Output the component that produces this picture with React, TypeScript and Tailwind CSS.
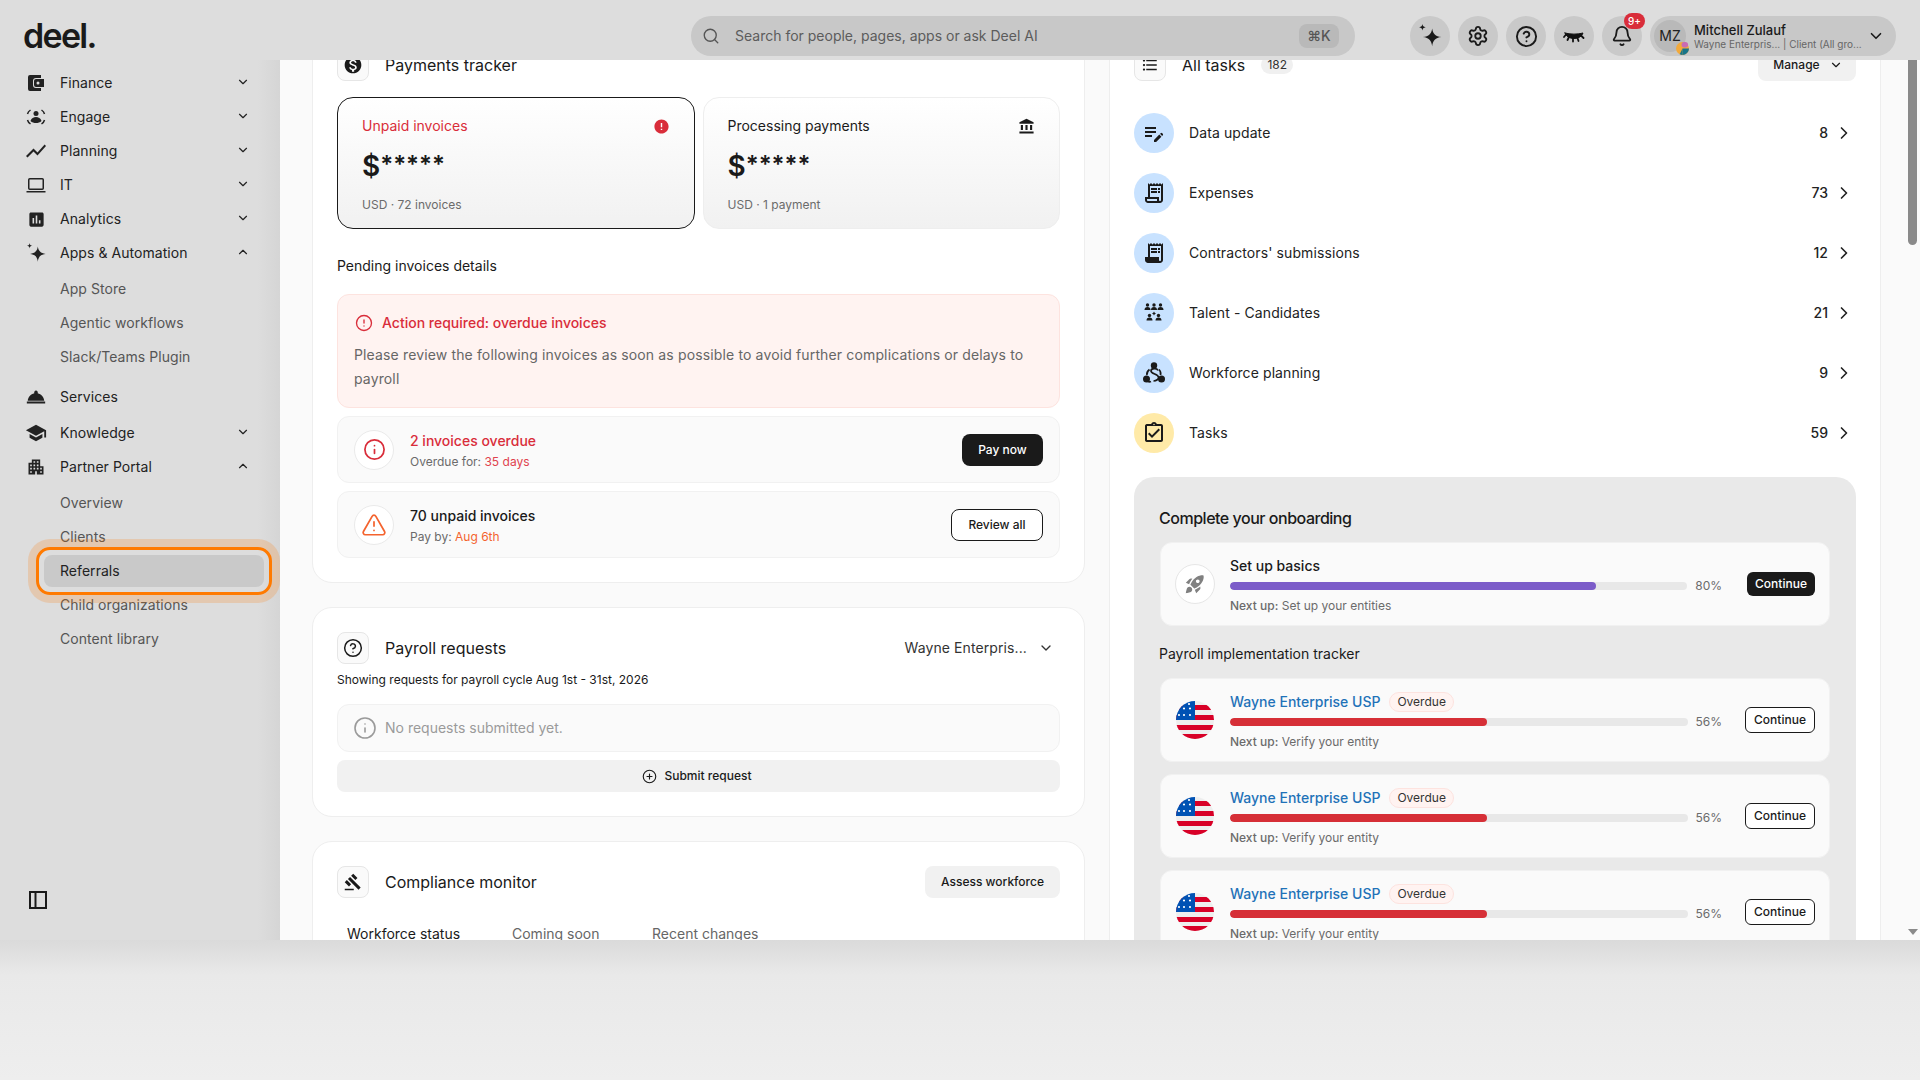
import { useId, type ReactNode } from 'react'
import {
  Bell,
  ChevronDown,
  ChevronRight,
  ChevronUp,
  CircleAlert,
  CircleHelp,
  CirclePlus,
  Info,
  Search,
  Settings,
  TriangleAlert,
} from 'lucide-react'
import {
  MdAccountBalance,
  MdApartment,
  MdAssessment,
  MdEditNote,
  MdError,
  MdFormatListBulleted,
  MdGavel,
  MdMonetizationOn,
  MdOutlineAssignmentTurnedIn,
  MdOutlineReceiptLong,
  MdReceiptLong,
  MdRocketLaunch,
  MdRoomService,
  MdSchool,
  MdShowChart,
} from 'react-icons/md'

function Sparkle({ size = 18 }: { size?: number }) {
  return (
    <svg width={size} height={size} viewBox="0 0 24 24" fill="currentColor">
      <path d="M14 5c.6 4.8 3 7.4 8.500 8-5.500.6-7.900 3.200-8.500 8.500-.6-5.300-3-7.900-8.500-8.500C11 12.400 13.400 9.800 14 5z" />
      <path d="M5 1c.3 2 .9 2.600 3 3-2.100.4-2.700 1-3 3-.3-2-.9-2.600-3-3 2.100-.4 2.700-1 3-3z" />
    </svg>
  )
}

function WalletIcon() {
  return (
    <svg width="18" height="18" viewBox="0 0 18 18" fill="currentColor">
      <path
        fillRule="evenodd"
        d="M3 1h11v3H9a3 3 0 0 0-3 3v4a3 3 0 0 0 3 3h5v3H3a2 2 0 0 1-2-2V3a2 2 0 0 1 2-2zm6 4h8v8H9a2 2 0 0 1-2-2V7a2 2 0 0 1 2-2zm2 2.500a1.500 1.500 0 1 0 0 3 1.500 1.500 0 0 0 0-3z"
      />
    </svg>
  )
}

function EngageIcon() {
  return (
    <svg width="20" height="20" viewBox="0 0 20 20" fill="none" stroke="currentColor" strokeWidth="1.5">
      <path d="M1.500 7C2 5 3 4 4.500 3M15.500 3C17 4 18 5 18.500 7M1.500 13c.5 2 1.500 3 3 4M15.500 17c1.500-1 2.500-2 3-4" />
      <circle cx="10" cy="6.500" r="2.500" fill="currentColor" stroke="none" />
      <path d="M4.500 14c1-3 3-4 5.500-4s4.500 1 5.500 4c-1.500 1.500-3.500 2-5.500 2s-4-.5-5.500-2z" fill="currentColor" stroke="none" />
    </svg>
  )
}

function LaptopIcon() {
  return (
    <svg width="20" height="16" viewBox="0 0 20 16" fill="none" stroke="currentColor" strokeWidth="1.5">
      <rect x="2.750" y="1.750" width="14.500" height="10.500" rx="1" />
      <path d="M.5 14.750h19" />
    </svg>
  )
}

function PanelIcon() {
  return (
    <svg width="18" height="18" viewBox="0 0 18 18" fill="none" stroke="#1a1a1a" strokeWidth="2">
      <rect x="1" y="1" width="16" height="16" />
      <path d="M6.500 1v16" />
    </svg>
  )
}

function ClosedEye() {
  return (
    <svg width="22" height="22" viewBox="0 0 22 22" fill="none" stroke="#111" strokeLinecap="round">
      <path d="M2 8c5 1.500 13 1.500 18 0-1 3-4 5.500-9 5.500S3 11 2 8z" fill="#111" strokeWidth="1" />
      <path d="M3 9.500 1 12M6 12l-1.500 3M10 13.500V16.500M14.500 13l1 3M18 10.500l2.500 2.500" strokeWidth="1.8" />
    </svg>
  )
}

function TalentIcon() {
  const person = (x: number, y: number) => (
    <g key={`${x}-${y}`}>
      <circle cx={x} cy={y} r="1.7" />
      <path d={`M${x - 3} ${y + 5}c0-2 1-3 3-3s3 1 3 3z`} />
    </g>
  )
  return (
    <svg width="22" height="22" viewBox="0 0 22 22" fill="#1a1a1a">
      {person(4.5, 3)}
      {person(11, 3)}
      {person(17.5, 3)}
      {person(6.5, 13.5)}
      {person(15.5, 13.5)}
      <path d="M11 9.500l.7 1.300 1.300.7-1.300.7-.7 1.300-.7-1.300-1.300-.7 1.300-.7z" />
    </svg>
  )
}

function WorkforceIcon() {
  return (
    <svg width="24" height="24" viewBox="0 0 24 24" fill="none" stroke="#1a1a1a" strokeWidth="1.7">
      <circle cx="12" cy="4.500" r="3.200" fill="#1a1a1a" stroke="none" />
      <circle cx="4.500" cy="18" r="3.500" fill="#1a1a1a" stroke="none" />
      <circle cx="19.500" cy="18" r="3.500" fill="#1a1a1a" stroke="none" />
      <path d="M16 9.500C15 7 9 7 9 10c0 3 7 3 7.500 6 .3 2-2 4-5 4" />
      <path d="M7.500 8.500C5.500 10 4.500 12 5 14M9 20.500c-1 .5-2 .5-3 0M18.500 14c.5-2 0-4-1.500-5.500" />
    </svg>
  )
}

function UsFlag() {
  const id = useId()
  return (
    <svg width="38" height="38" viewBox="0 0 38 38" className="shrink-0">
      <defs>
        <clipPath id={id}>
          <circle cx="19" cy="19" r="19" />
        </clipPath>
      </defs>
      <g clipPath={`url(#${id})`}>
        <rect width="38" height="38" fill="#eeeeee" />
        <rect y="4" width="38" height="5" fill="#d80027" />
        <rect y="14" width="38" height="5" fill="#d80027" />
        <rect y="24" width="38" height="5" fill="#d80027" />
        <rect y="33" width="38" height="5" fill="#d80027" />
        <rect width="19" height="19" fill="#0052b4" />
        <g fill="#ffffff">
          <circle cx="13" cy="3" r="1.1" />
          <circle cx="8" cy="7.500" r="1.1" />
          <circle cx="14" cy="7.500" r="1.1" />
          <circle cx="3" cy="14" r="1.1" />
          <circle cx="8" cy="14" r="1.1" />
          <circle cx="14" cy="14" r="1.1" />
        </g>
      </g>
    </svg>
  )
}

function CompanyDot() {
  return (
    <svg width="13" height="13" viewBox="0 0 14 14" className="absolute -right-[3px] -bottom-[3px]">
      <circle cx="7" cy="7" r="7" fill="#f2a93b" />
      <path d="M7 7h7a7 7 0 0 1-7 7z" fill="#17758a" />
      <path d="M7 7v7a7 7 0 0 1-3-.7L7 7z" fill="#17758a" />
      <rect x="6" y="0" width="7" height="6" rx="3" fill="#c86bb4" />
    </svg>
  )
}

function NavItem({ icon, label, open }: { icon: ReactNode; label: string; open?: boolean }) {
  return (
    <div className="flex h-[34px] items-center text-sm tracking-[0.05px] text-[#222222]">
      <span className="flex w-[60px] shrink-0 justify-center pl-[16px] pr-[4px]">{icon}</span>
      <span>{label}</span>
      {open === true && <ChevronUp size={14} strokeWidth={2} className="-mt-[2px] ml-auto mr-[30px]" />}
      {open === false && <ChevronDown size={14} strokeWidth={2} className="-mt-[2px] ml-auto mr-[30px]" />}
    </div>
  )
}

function SubItem({ label }: { label: string }) {
  return <div className="flex h-[34px] items-center pl-[60px] text-sm tracking-[0.05px] text-[#555555]">{label}</div>
}

function Sidebar() {
  return (
    <aside className="flex h-full w-[280px] shrink-0 flex-col bg-[linear-gradient(to_right,#dddddd_92%,#d5d5d5)] pt-[6px]">
      <NavItem icon={<WalletIcon />} label="Finance" open={false} />
      <NavItem icon={<EngageIcon />} label="Engage" open={false} />
      <NavItem icon={<MdShowChart size={24} />} label="Planning" open={false} />
      <NavItem icon={<LaptopIcon />} label="IT" open={false} />
      <NavItem icon={<MdAssessment size={19} />} label="Analytics" open={false} />
      <NavItem icon={<Sparkle size={22} />} label="Apps & Automation" open />
      <div className="mt-[2px]">
        <SubItem label="App Store" />
        <SubItem label="Agentic workflows" />
        <SubItem label="Slack/Teams Plugin" />
      </div>
      <div className="mt-[6px]">
        <NavItem icon={<MdRoomService size={22} />} label="Services" />
      </div>
      <div className="mt-[2px]">
        <NavItem icon={<MdSchool size={22} />} label="Knowledge" open={false} />
        <NavItem icon={<MdApartment size={20} />} label="Partner Portal" open />
      </div>
      <div className="mt-[2px]">
        <SubItem label="Overview" />
        <SubItem label="Clients" />
        <div className="relative my-px ml-[44px] flex h-8 w-[220px] items-center rounded-lg bg-[#c9c9c9] pl-4 text-sm tracking-[0.05px] text-[#222222]">
          Referrals
          <div className="absolute -inset-2 rounded-[14px] border-[3px] border-[#ff7a00] shadow-[0_0_0_8px_rgba(255,122,0,0.2)]" />
        </div>
        <SubItem label="Child organizations" />
        <SubItem label="Content library" />
      </div>
      <div className="mb-[31px] ml-[29px] mt-auto">
        <PanelIcon />
      </div>
    </aside>
  )
}

function HeaderButton({ children }: { children: ReactNode }) {
  return (
    <div className="relative flex h-10 w-10 items-center justify-center rounded-full bg-[#c9c9c9] text-[#1a1a1a]">
      {children}
    </div>
  )
}

function Header() {
  return (
    <header className="flex h-[60px] shrink-0 items-center bg-[#dddddd] pt-3">
      <div className="w-[691px] shrink-0 pl-[23px] text-[34px] font-semibold leading-none tracking-[-0.05em] text-[#1a1a1a]">
        deel.
      </div>
      <div className="flex h-10 w-[664px] shrink-0 items-center rounded-full bg-[#c8c8c8] pl-[11px] pr-[16px]">
        <Search size={18} strokeWidth={1.8} className="text-[#555555]" />
        <span className="ml-[15px] text-sm text-[#5c5c5c]">Search for people, pages, apps or ask Deel AI</span>
        <span className="ml-auto flex h-6 w-10 items-center justify-center rounded-lg bg-[#b9b9b9] text-sm font-medium text-[#555555]">
          ⌘K
        </span>
      </div>
      <div className="ml-[55px] flex gap-2">
        <HeaderButton>
          <Sparkle size={26} />
        </HeaderButton>
        <HeaderButton>
          <Settings size={22} strokeWidth={2} />
        </HeaderButton>
        <HeaderButton>
          <CircleHelp size={23} strokeWidth={2} />
        </HeaderButton>
        <HeaderButton>
          <ClosedEye />
        </HeaderButton>
        <HeaderButton>
          <Bell size={22} strokeWidth={2} />
          <span className="absolute -right-[3px] -top-[3px] flex h-4 w-[21px] items-center justify-center rounded-full bg-[#d92d3a] text-[10px] font-medium text-white">
            9+
          </span>
        </HeaderButton>
      </div>
      <div className="ml-2 flex h-10 w-[246px] shrink-0 items-center rounded-full bg-[#c8c8c8] pl-1">
        <div className="relative flex h-8 w-8 shrink-0 items-center justify-center rounded-full bg-[#b9b9b9] text-sm text-[#222222]">
          MZ
          <CompanyDot />
        </div>
        <div className="ml-2 w-[168px] shrink-0">
          <div className="text-[13px] font-medium leading-[16px] text-[#1a1a1a]">Mitchell Zulauf</div>
          <div className="whitespace-nowrap text-[10px] leading-[12px] text-[#666666]">
            Wayne Enterpris... | Client (All gro...
          </div>
        </div>
        <ChevronDown size={18} strokeWidth={2.2} className="ml-[5px] text-[#1a1a1a]" />
      </div>
    </header>
  )
}

function Card({ children }: { children: ReactNode }) {
  return <section className="rounded-[20px] border border-[#eeeeee] bg-white p-6">{children}</section>
}

function IconBox({ children }: { children: ReactNode }) {
  return (
    <div className="flex h-8 w-8 shrink-0 items-center justify-center rounded-lg border border-[#e6e6e6] bg-[#fafafa] text-[#1a1a1a]">
      {children}
    </div>
  )
}

function BalanceCard({
  title,
  note,
  icon,
  selected,
}: {
  title: ReactNode
  note: string
  icon: ReactNode
  selected?: boolean
}) {
  return (
    <div
      className={`h-[132px] flex-1 rounded-2xl border bg-gradient-to-b from-white to-[#f1f1f1] px-6 pt-[18px] ${
        selected ? 'border-[#1a1a1a]' : 'border-[#eeeeee]'
      }`}
    >
      <div className="flex h-5 items-center justify-between text-sm">
        {title}
        {icon}
      </div>
      <div className="mt-[13px] h-[34px] text-[28px] font-semibold leading-[34px] text-[#1a1a1a]">
        $<span className="inline-block -translate-y-[3px] text-2xl">*****</span>
      </div>
      <div className="mt-[14px] text-xs leading-4 text-[#6b6b6b]">{note}</div>
    </div>
  )
}

function InvoiceRow({
  icon,
  title,
  sub,
  action,
}: {
  icon: ReactNode
  title: ReactNode
  sub: ReactNode
  action: ReactNode
}) {
  return (
    <div className="flex h-[67px] items-center rounded-xl border border-[#f1f1f1] bg-[#fafafa] pl-4 pr-4">
      <div className="flex h-10 w-10 shrink-0 items-center justify-center rounded-full border border-[#eaeaea] bg-white">
        {icon}
      </div>
      <div className="ml-4 pt-[2px]">
        <div className="text-sm font-medium leading-5">{title}</div>
        <div className="mt-[3px] text-xs leading-4 text-[#6b6b6b]">{sub}</div>
      </div>
      <div className="ml-auto">{action}</div>
    </div>
  )
}

function LeftColumn() {
  return (
    <div className="flex w-[773px] shrink-0 flex-col gap-6">
      <Card>
        <div className="flex items-center gap-4">
          <IconBox>
            <MdMonetizationOn size={20} />
          </IconBox>
          <h2 className="text-base text-[#1a1a1a]">Payments tracker</h2>
        </div>
        <div className="mt-4 flex gap-2">
          <BalanceCard
            selected
            title={<span className="text-[#d92d3a]">Unpaid invoices</span>}
            note="USD · 72 invoices"
            icon={<MdError size={17} className="text-[#d92d3a]" />}
          />
          <BalanceCard
            title={<span className="text-[#1a1a1a]">Processing payments</span>}
            note="USD · 1 payment"
            icon={<MdAccountBalance size={17} className="text-[#1a1a1a]" />}
          />
        </div>
        <div className="mt-[27px] text-sm leading-5 text-[#1a1a1a]">Pending invoices details</div>
        <div className="mt-[18px] rounded-xl border border-[#fde3df] bg-[#fff3f1] px-4 pb-4 pt-4">
          <div className="flex h-6 items-center gap-[7px] text-sm font-medium text-[#d92d3a]">
            <CircleAlert size={18} strokeWidth={1.8} className="ml-[1px]" />
            <span className="ml-[2px]">Action required: overdue invoices</span>
          </div>
          <p className="mt-2 text-sm leading-6 tracking-[0.14px] text-[#666666]">
            Please review the following invoices as soon as possible to avoid further complications or delays to payroll
          </p>
        </div>
        <div className="mt-2 flex flex-col gap-2">
          <InvoiceRow
            icon={<Info size={23} strokeWidth={1.8} className="text-[#d92d3a]" />}
            title={<span className="text-[#d92d3a]">2 invoices overdue</span>}
            sub={
              <>
                Overdue for: <span className="text-[#e0424e]">35 days</span>
              </>
            }
            action={
              <button className="flex h-8 w-[81px] items-center justify-center rounded-lg bg-[#1a1a1a] text-xs font-medium text-white">
                Pay now
              </button>
            }
          />
          <InvoiceRow
            icon={<TriangleAlert size={26} strokeWidth={1.6} className="text-[#f4632e]" />}
            title={<span className="text-[#1a1a1a]">70 unpaid invoices</span>}
            sub={
              <>
                Pay by: <span className="text-[#f4632e]">Aug 6th</span>
              </>
            }
            action={
              <button className="flex h-8 w-[92px] items-center justify-center rounded-lg border border-[#1a1a1a] bg-white text-xs font-medium text-[#1a1a1a]">
                Review all
              </button>
            }
          />
        </div>
      </Card>

      <Card>
        <div className="flex items-center gap-4">
          <IconBox>
            <CircleHelp size={20} strokeWidth={1.8} />
          </IconBox>
          <h2 className="text-base text-[#1a1a1a]">Payroll requests</h2>
          <div className="ml-auto mr-[6px] flex items-center gap-[11px] text-sm tracking-[0.1px] text-[#333333]">
            Wayne Enterpris...
            <ChevronDown size={16} strokeWidth={2} />
          </div>
        </div>
        <p className="mt-2 text-xs leading-4 text-[#1a1a1a]">Showing requests for payroll cycle Aug 1st - 31st, 2026</p>
        <div className="mt-4 flex h-12 items-center gap-2 rounded-xl border border-[#f1f1f1] bg-[#fafafa] pl-[15px] text-sm text-[#9a9a9a]">
          <Info size={24} strokeWidth={1.6} />
          No requests submitted yet.
        </div>
        <button className="mt-2 flex h-8 w-full items-center justify-center gap-[7px] rounded-lg bg-[#f1f1f1] pr-[3px] text-xs font-medium text-[#1a1a1a]">
          <CirclePlus size={15} strokeWidth={1.8} />
          Submit request
        </button>
      </Card>

      <Card>
        <div className="flex items-center gap-4">
          <IconBox>
            <MdGavel size={18} />
          </IconBox>
          <h2 className="text-base text-[#1a1a1a]">Compliance monitor</h2>
          <button className="ml-auto flex h-8 w-[135px] items-center justify-center rounded-lg bg-[#f1f1f1] text-xs font-medium text-[#1a1a1a]">
            Assess workforce
          </button>
        </div>
        <div className="mt-[26px] flex pl-[10px] text-sm leading-5 text-[#666666]">
          <span className="w-[165px] text-[#1a1a1a]">Workforce status</span>
          <span className="w-[140px]">Coming soon</span>
          <span>Recent changes</span>
        </div>
      </Card>
    </div>
  )
}

function TaskRow({
  icon,
  label,
  count,
  yellow,
}: {
  icon: ReactNode
  label: string
  count: number
  yellow?: boolean
}) {
  return (
    <div className="flex h-10 items-center text-sm text-[#222222]">
      <div
        className={`flex h-10 w-10 shrink-0 items-center justify-center rounded-full text-[#1a1a1a] ${
          yellow ? 'bg-[#ffeaa8]' : 'bg-[#c8e2ff]'
        }`}
      >
        {icon}
      </div>
      <span className="ml-[15px] tracking-[0.1px]">{label}</span>
      <span className="ml-auto font-medium">{count}</span>
      <ChevronRight size={20} strokeWidth={2} className="ml-[6px] mr-[2px]" />
    </div>
  )
}

function TrackerCard() {
  return (
    <div className="flex h-[84px] items-center rounded-xl border border-[#f1f1f1] bg-[#fafafa] pl-[15px] pr-[14px]">
      <UsFlag />
      <div className="ml-4 flex-1 pt-[2px]">
        <div className="flex h-5 items-center text-sm font-medium text-[#1f72b8]">
          Wayne Enterprise USP
          <span className="ml-[9px] flex h-5 items-center rounded-full border border-[#fde3df] bg-[#fff3f1] px-[7px] text-xs font-normal text-[#333333]">
            Overdue
          </span>
        </div>
        <div className="mt-[6px] flex h-2 items-center">
          <div className="h-2 flex-1 overflow-hidden rounded-full bg-[#e8e8e8]">
            <div className="h-full rounded-full bg-[#d62f37]" style={{ width: '56%' }} />
          </div>
          <span className="ml-[7px] text-xs leading-none text-[#6b6b6b]">56%</span>
        </div>
        <div className="mt-2 text-xs leading-4 text-[#6b6b6b]">
          <span className="font-medium">Next up:</span> Verify your entity
        </div>
      </div>
      <button className="ml-[23px] flex h-[26px] w-[70px] items-center justify-center rounded-md border border-[#1a1a1a] bg-white text-xs font-medium text-[#1a1a1a]">
        Continue
      </button>
    </div>
  )
}

function RightColumn() {
  return (
    <div className="w-[772px] shrink-0">
      <Card>
        <div className="flex items-center">
          <IconBox>
            <MdFormatListBulleted size={18} />
          </IconBox>
          <h2 className="ml-4 text-base text-[#1a1a1a]">All tasks</h2>
          <span className="ml-4 flex h-[18px] w-8 items-center justify-center rounded-full bg-[#f0f0f0] text-xs text-[#333333]">
            182
          </span>
          <button className="ml-auto flex h-8 w-[98px] items-center justify-center gap-[9px] rounded-lg bg-[#f1f1f1] pl-[2px] text-xs font-medium text-[#1a1a1a]">
            Manage
            <ChevronDown size={14} strokeWidth={2} />
          </button>
        </div>
        <div className="mt-8 flex flex-col gap-5">
          <TaskRow icon={<MdEditNote size={24} />} label="Data update" count={8} />
          <TaskRow icon={<MdOutlineReceiptLong size={24} />} label="Expenses" count={73} />
          <TaskRow icon={<MdReceiptLong size={24} />} label="Contractors' submissions" count={12} />
          <TaskRow icon={<TalentIcon />} label="Talent - Candidates" count={21} />
          <TaskRow icon={<WorkforceIcon />} label="Workforce planning" count={9} />
          <TaskRow icon={<MdOutlineAssignmentTurnedIn size={24} />} label="Tasks" count={59} yellow />
        </div>
        <div className="mt-6 rounded-[20px] bg-[#e9e9e9] px-[26px] pb-6 pt-[29px]">
          <h3 className="-ml-[1px] text-base font-medium leading-6 tracking-[-0.03em] text-[#1a1a1a]">
            Complete your onboarding
          </h3>
          <div className="mt-3 flex h-[84px] items-center rounded-xl border border-[#f1f1f1] bg-[#fafafa] pl-[14px] pr-[14px]">
            <div className="flex h-10 w-10 shrink-0 items-center justify-center rounded-full border border-[#e6e6e6] bg-white text-[#808080]">
              <MdRocketLaunch size={22} />
            </div>
            <div className="ml-[15px] flex-1 pt-[2px]">
              <div className="flex h-5 items-center text-sm font-medium text-[#1a1a1a]">Set up basics</div>
              <div className="mt-[6px] flex h-2 items-center">
                <div className="h-2 flex-1 overflow-hidden rounded-full bg-[#e8e8e8]">
                  <div className="h-full rounded-full bg-[#7c5cc9]" style={{ width: '80%' }} />
                </div>
                <span className="ml-2 text-xs leading-none text-[#6b6b6b]">80%</span>
              </div>
              <div className="mt-2 text-xs leading-4 text-[#6b6b6b]">
                <span className="font-medium">Next up:</span> Set up your entities
              </div>
            </div>
            <button className="ml-[25px] flex h-6 w-[68px] items-center justify-center rounded-md bg-[#1a1a1a] text-xs font-medium text-white">
              Continue
            </button>
          </div>
          <div className="-ml-[1px] mt-[18px] text-sm leading-5 text-[#1a1a1a]">Payroll implementation tracker</div>
          <div className="mt-[14px] flex flex-col gap-3">
            <TrackerCard />
            <TrackerCard />
            <TrackerCard />
          </div>
        </div>
      </Card>
    </div>
  )
}

function ScrollTrack() {
  return (
    <div className="flex h-full w-[15px] shrink-0 flex-col items-center justify-between bg-[#fafafa] pb-[5px]">
      <div className="h-[185px] w-[9px] rounded-b-full bg-[#8a8a8a]" />
      <svg width="10" height="6" viewBox="0 0 10 6" fill="#8a8a8a">
        <path d="M0 0h10L5 6z" />
      </svg>
    </div>
  )
}

export default function App() {
  return (
    <div className="flex h-screen w-full flex-col overflow-hidden bg-[#eeeeee] font-['Inter',sans-serif]">
      <Header />
      <div className="flex h-[880px] shrink-0">
        <Sidebar />
        <main className="flex min-w-0 flex-1 overflow-hidden bg-[#fafafa]">
          <div className="flex-1 overflow-hidden pl-8">
            <div className="-mt-[36px] flex items-start gap-6">
              <LeftColumn />
              <RightColumn />
            </div>
          </div>
          <ScrollTrack />
        </main>
      </div>
      <div className="flex-1 bg-[linear-gradient(#dadada,#e9e9e9_25%,#eeeeee)]" />
    </div>
  )
}
